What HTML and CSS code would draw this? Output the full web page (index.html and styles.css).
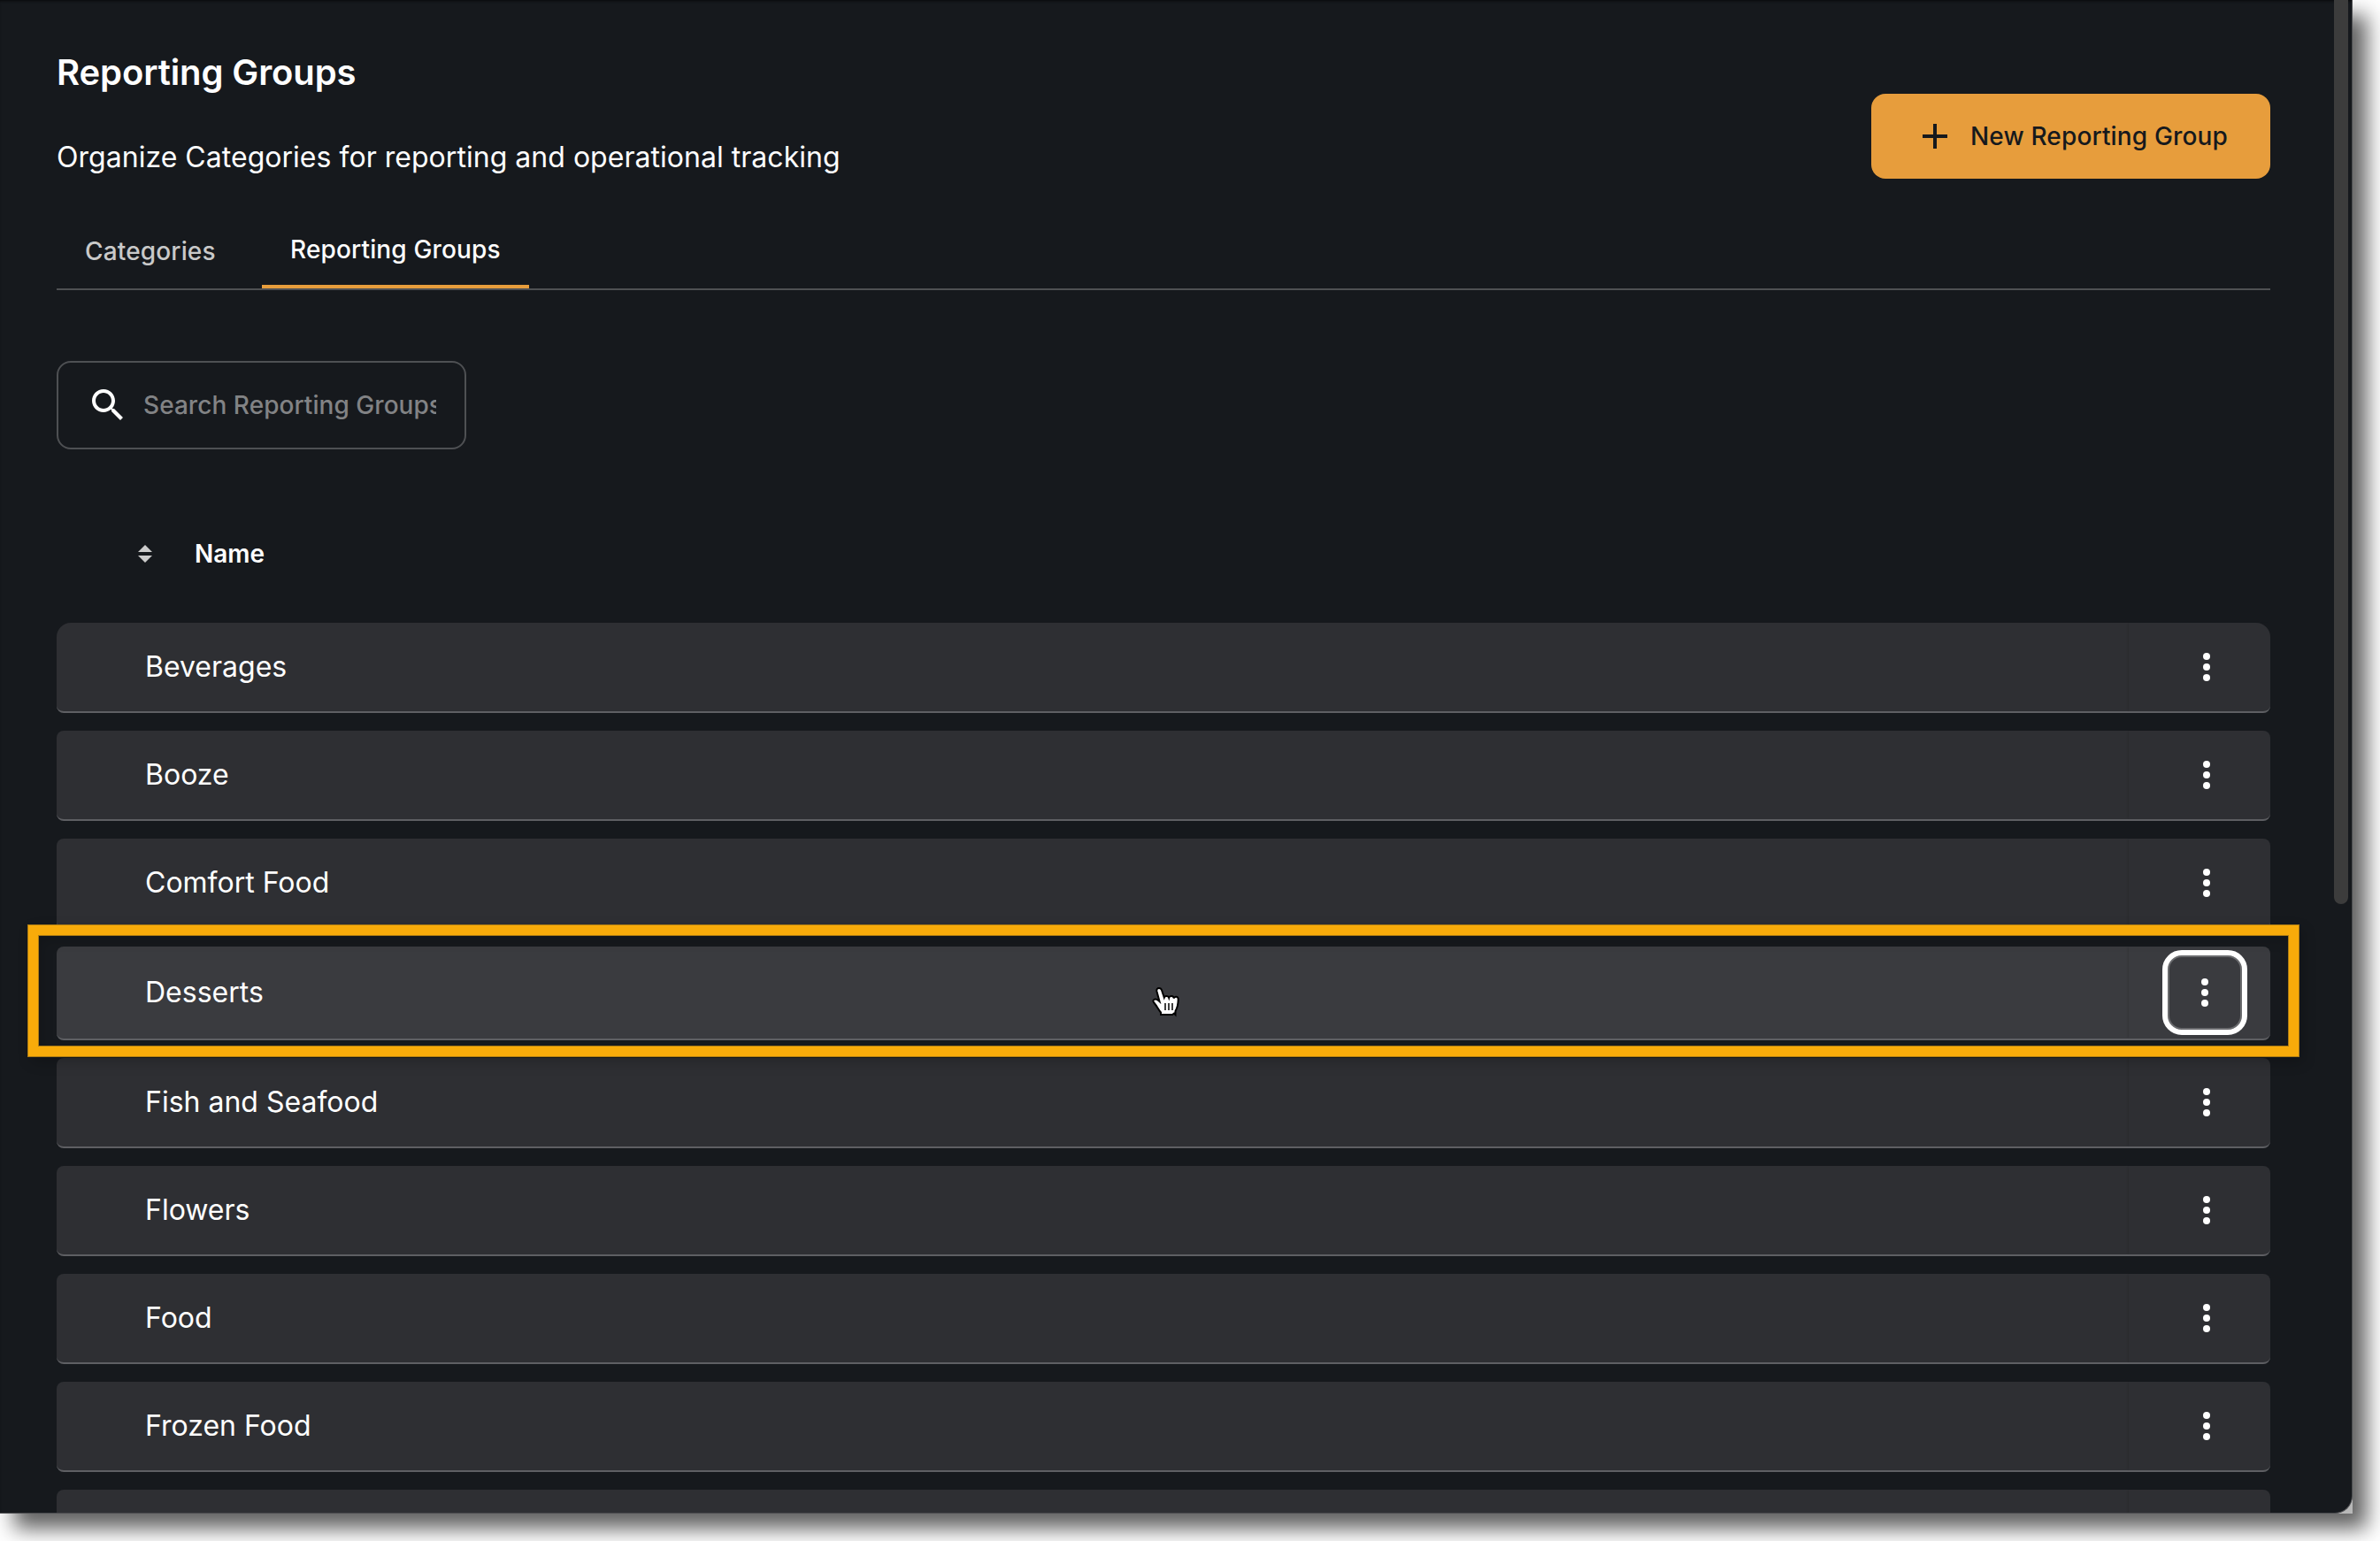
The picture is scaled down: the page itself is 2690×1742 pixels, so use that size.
FILE: index.html
```
<!DOCTYPE html>
<html lang="en">
	<head>
		<meta charset="UTF-8">
		<title>Reporting Groups</title>
		<link rel="stylesheet" href="styles.css">
	</head>
	<body>
		<svg class="sprite" width="0" height="0">
			<symbol id="dots" viewBox="0 0 8 32">
				<circle cx="4" cy="4" r="4"/>
				<circle cx="4" cy="16" r="4"/>
				<circle cx="4" cy="28" r="4"/>
			</symbol>
		</svg>
		<div class="frame">
		<div class="window">
			<div class="header">
				<div class="heading">
					<h1>Reporting Groups</h1>
					<p>Organize Categories for reporting and operational tracking</p>
				</div>
				<button class="new-btn">
					<svg width="48" height="48" viewBox="0 0 24 24"><path d="M19 13h-6v6h-2v-6H5v-2h6V5h2v6h6z"/></svg>
					<span>New Reporting Group</span>
				</button>
			</div>
			<div class="tabs">
				<a class="tab">Categories</a>
				<a class="tab active">Reporting Groups</a>
			</div>
			<div class="search">
				<svg width="48" height="48" viewBox="0 0 24 24"><path d="M15.500 14h-.79l-.28-.27C15.410 12.590 16 11.110 16 9.500 16 5.910 13.090 3 9.500 3S3 5.910 3 9.500 5.910 16 9.500 16c1.610 0 3.090-.59 4.230-1.570l.27.28v.79l5 4.990L20.490 19zm-6 0C7.010 14 5 11.990 5 9.500S7.010 5 9.500 5 14 7.010 14 9.500 11.990 14 9.500 14"/></svg>
				<span class="placeholder">Search Reporting Groups</span>
			</div>
			<div class="list-head">
				<svg width="16" height="20" viewBox="0 0 16 20"><path d="M8 0l8 8H0zM0 12h16l-8 8z"/></svg>
				<span>Name</span>
			</div>
			<div class="list">
				<div class="row">
					<span class="name">Beverages</span>
					<div class="actions"><button class="more"><svg><use href="#dots"/></svg></button></div>
				</div>
				<div class="row">
					<span class="name">Booze</span>
					<div class="actions"><button class="more"><svg><use href="#dots"/></svg></button></div>
				</div>
				<div class="row">
					<span class="name">Comfort Food</span>
					<div class="actions"><button class="more"><svg><use href="#dots"/></svg></button></div>
				</div>
				<div class="row hover">
					<span class="name">Desserts</span>
					<div class="actions"><button class="more focus"><svg><use href="#dots"/></svg></button></div>
					<div class="callout"></div>
					<svg class="cursor" width="40" height="42" viewBox="0 0 40 42">
						<path d="M11 5c-2 0-3 1.600-2.600 3.400L11.500 20c-2-2-4.500-3.200-6.200-2-1.600 1-.8 2.600.4 4 3 3.600 4.800 7.500 7.300 10.500V35h13l2-1.500 1.500 1.500V31c2.300-4 3.200-8.500 3.200-13.500 0-3.300-4-3.800-4.800-1-.5-3-5-3.200-5.700-.5-.8-2.500-4.600-2.600-5.400-.3L14 7.300C13.500 5.800 12.500 5 11 5z" fill="#fff" stroke="#000" stroke-width="2"/>
						<path d="M18 22v8M22 22v8M26 22v8" stroke="#000" stroke-width="1.500" fill="none"/>
					</svg>
				</div>
				<div class="row">
					<span class="name">Fish and Seafood</span>
					<div class="actions"><button class="more"><svg><use href="#dots"/></svg></button></div>
				</div>
				<div class="row">
					<span class="name">Flowers</span>
					<div class="actions"><button class="more"><svg><use href="#dots"/></svg></button></div>
				</div>
				<div class="row">
					<span class="name">Food</span>
					<div class="actions"><button class="more"><svg><use href="#dots"/></svg></button></div>
				</div>
				<div class="row">
					<span class="name">Frozen Food</span>
					<div class="actions"><button class="more"><svg><use href="#dots"/></svg></button></div>
				</div>
				<div class="row">
					<div class="actions"></div>
				</div>
			</div>
			<div class="scrollbar"></div>
		</div>
		</div>
	</body>
</html>
```
FILE: styles.css
```
*{
	box-sizing: border-box;
}
html{
	background: #fff;
}
body{
	margin: 0;
	height: 1742px;
	overflow: hidden;
	font-family: Inter, "Liberation Sans", sans-serif;
	color: #fff;
}
h1, p{
	margin: 0;
}
button{
	border: none;
	padding: 0;
	background: none;
	font-family: inherit;
}
.sprite{
	position: absolute;
}
/* outer box carries the drop shadow, its grey shows at the rounded corner */
.frame{
	width: 2659px;
	height: 1711px;
	background: #b8b8b8;
	box-shadow: 16px 17px 22px rgba(0,0,0,.62);
}
.window{
	position: relative;
	width: 2659px;
	height: 1711px;
	padding: 56px 92px 0 64px;
	background: #16191d;
	border-right: 1px solid #4c4d50;
	border-bottom: 1px solid #4c4d50;
	border-bottom-right-radius: 20px;
	box-shadow: inset 0 3px 4px -3px #000;
	overflow: hidden;
}
.header{
	display: flex;
	justify-content: space-between;
}
.heading h1{
	font-size: 40px;
	line-height: 51px;
	font-weight: 600;
	letter-spacing: -.1px;
}
.heading p{
	margin-top: 47px;
	font-size: 32px;
	line-height: 48px;
	letter-spacing: .03px;
}
.new-btn{
	display: flex;
	align-items: center;
	gap: 16px;
	width: 451px;
	height: 96px;
	margin-top: 50px;
	padding: 0 48px;
	border-radius: 16px;
	background: #e79d3c;
	color: #16191d;
	font-size: 28px;
	font-weight: 500;
	letter-spacing: .15px;
	white-space: nowrap;
}
.new-btn svg{
	flex: none;
	fill: #16191d;
}
.tabs{
	display: flex;
	height: 90px;
	margin-top: 36px;
	border-bottom: 2px solid #4e5053;
}
.tab{
	width: 232px;
	padding: 0 32px;
	font-size: 28px;
	line-height: 93px;
	font-weight: 500;
	letter-spacing: .15px;
	color: #c9c9c9;
	white-space: nowrap;
}
.tab.active{
	width: 302px;
	height: 88px;
	line-height: 89px;
	color: #fff;
	border-bottom: 4px solid #e79d3c;
}
.search{
	display: flex;
	align-items: center;
	width: 463px;
	height: 100px;
	margin-top: 80px;
	padding: 0 32px;
	border: 2px solid #4e5053;
	border-radius: 16px;
}
.search svg{
	flex: none;
	fill: #fff;
}
.placeholder{
	margin-left: 16px;
	overflow: hidden;
	white-space: nowrap;
	font-size: 28px;
	line-height: 40px;
	font-weight: 450;
	letter-spacing: .05px;
	color: #828385;
}
.list-head{
	display: flex;
	align-items: center;
	gap: 48px;
	height: 156px;
	margin-top: 40px;
	padding-left: 92px;
	font-size: 28px;
	font-weight: 600;
}
.list-head svg{
	fill: #ccc;
}
.list{
	display: flex;
	flex-direction: column;
	gap: 20px;
}
.row{
	position: relative;
	display: flex;
	flex: none;
	align-items: center;
	justify-content: space-between;
	height: 102px;
	padding-left: 100px;
	border-bottom: 2px solid #5e5f63;
	border-radius: 8px;
	background: #2e2f33;
}
.row:first-child{
	border-radius: 16px 16px 8px 8px;
}
.row .name{
	font-size: 32px;
	line-height: 48px;
}
.actions{
	display: flex;
	align-items: center;
	justify-content: flex-end;
	width: 160px;
	height: 100%;
	margin-left: auto;
	padding-right: 24px;
	box-shadow: -2px 0 2px -1px rgba(0,0,0,.12);
}
.more{
	display: flex;
	align-items: center;
	justify-content: center;
	width: 96px;
	height: 96px;
}
.more svg{
	width: 8px;
	height: 32px;
	fill: #fff;
}
.row.hover{
	z-index: 2;
	height: 106px;
	background: #3a3b3f;
}
.more.focus{
	margin-right: 2px;
	border: 6px solid #fff;
	border-radius: 22px;
	box-shadow: inset 0 0 0 2px #6a6b6e;
}
.callout{
	position: absolute;
	left: -33px;
	right: -33px;
	top: -25px;
	height: 150px;
	border: 12px solid #f8ab0a;
	outline: 1px solid #ad7c14;
	outline-offset: -1px;
	box-shadow: 4px 6px 14px rgba(0,0,0,.2), inset 0 0 0 1px #ad7c14, inset 4px 6px 14px rgba(0,0,0,.15);
}
.cursor{
	position: absolute;
	left: 1235px;
	top: 42px;
}
.scrollbar{
	position: absolute;
	top: 0;
	right: 4px;
	width: 16px;
	height: 1022px;
	border-radius: 0 0 8px 8px;
	background: #3c3c3c;
}
```
